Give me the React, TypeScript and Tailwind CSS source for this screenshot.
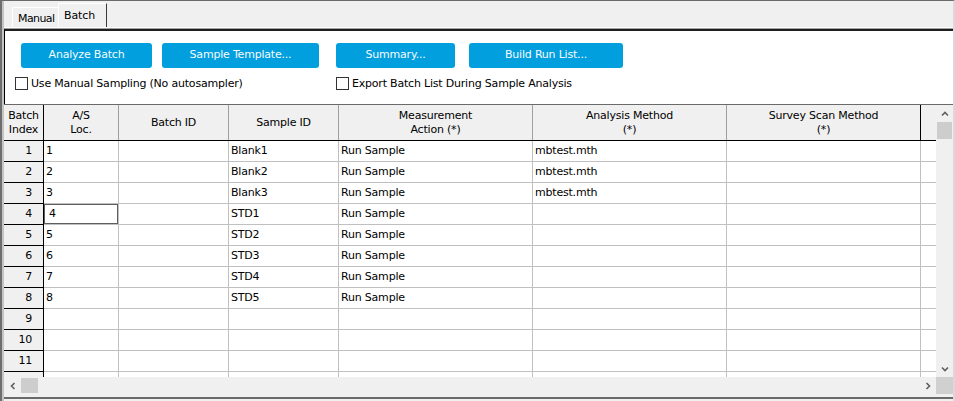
import React from "react";

type Row = { loc: string; sample: string; action: string; method: string; idx: string };

const base: Omit<Row, "idx">[] = [
  { loc: "1", sample: "Blank1", action: "Run Sample", method: "mbtest.mth" },
  { loc: "2", sample: "Blank2", action: "Run Sample", method: "mbtest.mth" },
  { loc: "3", sample: "Blank3", action: "Run Sample", method: "mbtest.mth" },
  { loc: "4", sample: "STD1", action: "Run Sample", method: "" },
  { loc: "5", sample: "STD2", action: "Run Sample", method: "" },
  { loc: "6", sample: "STD3", action: "Run Sample", method: "" },
  { loc: "7", sample: "STD4", action: "Run Sample", method: "" },
  { loc: "8", sample: "STD5", action: "Run Sample", method: "" },
  { loc: "", sample: "", action: "", method: "" },
  { loc: "", sample: "", action: "", method: "" },
  { loc: "", sample: "", action: "", method: "" },
  { loc: "", sample: "", action: "", method: "" },
];

const data: Row[] = base.map((r, i) => ({ ...r, idx: i < 11 ? String(i + 1) : "" }));

const PTS: Record<string, string> = {
  up: "1,5.5 4,2.5 7,5.5",
  down: "1,2.5 4,5.5 7,2.5",
  left: "5.5,1 2.5,4 5.5,7",
  right: "2.5,1 5.5,4 2.5,7",
};

function Chev({ dir }: { dir: "up" | "down" | "left" | "right" }) {
  return (
    <svg width="8" height="8" viewBox="0 0 8 8">
      <polyline points={PTS[dir]} fill="none" stroke="#5f5f5f" strokeWidth="1.6" />
    </svg>
  );
}

function Button({ w, label, cls }: { w: string; label: string; cls: string }) {
  return (
    <div
      className={`${w} ${cls} h-[25px] rounded-[3px] bg-[#029fde] text-[#f6fbff] flex items-center justify-center`}
    >
      {label}
    </div>
  );
}

function CheckBox() {
  return <div className="w-[13px] h-[13px] border border-[#333333] bg-white shrink-0" />;
}

export default function App() {
  return (
    <div className="w-[955px] h-[401px] overflow-hidden bg-[#f0f0f0] text-black text-[11px] tracking-[-0.2px] font-['DejaVu_Sans',sans-serif] flex flex-col border-t border-t-[#6a6a6a] border-l-2 border-l-[#6e6e6e] border-r-2 border-r-[#d9d9d9]">
      <div className="flex-1 flex flex-col border-l-2 border-l-[#c4c4c4]">
        {/* Tab strip */}
        <div className="h-[27px] flex items-end pl-[8px] border-b border-b-white">
          <div className="h-[20px] w-[46px] border-l border-t border-white pl-[5px] pt-[4px] leading-[13px] tracking-[-0.6px] whitespace-nowrap">
            Manual
          </div>
          <div className="h-[24px] w-[49px] border-l border-t border-white border-r border-r-[#3a3a3a] pl-[5px] pt-[5px] leading-[13px] tracking-[-0.1px]">
            Batch
          </div>
        </div>
        <div className="h-px bg-[#a0a0a0]" />

        {/* Top panel */}
        <div className="h-[75px] bg-white border-t-2 border-t-[#1e1e1e] border-l border-l-black pt-[12px]">
          <div className="flex">
            <Button w="w-[131px]" cls="ml-[16px]" label="Analyze Batch" />
            <Button w="w-[157px]" cls="ml-[10px]" label="Sample Template..." />
            <Button w="w-[119px]" cls="ml-[17px]" label="Summary..." />
            <Button w="w-[154px]" cls="ml-[14px]" label="Build Run List..." />
          </div>
          <div className="flex mt-[9px] h-[13px] items-center">
            <div className="ml-[10px] w-[321px] flex items-center">
              <CheckBox />
              <span className="ml-[3px] leading-[13px]">Use Manual Sampling (No autosampler)</span>
            </div>
            <div className="flex items-center">
              <CheckBox />
              <span className="ml-[3px] leading-[13px]">Export Batch List During Sample Analysis</span>
            </div>
          </div>
        </div>

        {/* Grid */}
        <div className="h-[290px] flex border-t border-t-[#6a6a6a]">
          <div className="w-[932px] flex flex-col">
            {/* Header */}
            <div className="h-[36px] flex border-b border-b-black bg-[#f0f0f0] leading-[14px] text-center">
              <div className="w-[40px] border-r border-r-black flex items-center justify-center">
                Batch<br />Index
              </div>
              <div className="w-[75px] border-r border-r-[#a0a0a0] flex items-center justify-center">
                A/S<br />Loc.
              </div>
              <div className="w-[110px] border-r border-r-[#a0a0a0] flex items-center justify-center">
                Batch ID
              </div>
              <div className="w-[110px] border-r border-r-[#a0a0a0] flex items-center justify-center">
                Sample ID
              </div>
              <div className="w-[194px] border-r border-r-[#a0a0a0] flex items-center justify-center">
                Measurement<br />Action (*)
              </div>
              <div className="w-[194px] border-r border-r-[#a0a0a0] flex items-center justify-center">
                Analysis Method<br />(*)
              </div>
              <div className="w-[194px] border-r border-r-black flex items-center justify-center">
                Survey Scan Method<br />(*)
              </div>
              <div className="w-[15px]" />
            </div>

            {/* Body */}
            <div className="h-[236px] overflow-hidden bg-white">
              {data.map((r, i) => (
                <div key={i} className="h-[21px] flex">
                  <div className="w-[40px] bg-[#f0f0f0] border-r border-b border-black pr-[11px] flex items-center justify-end">
                    {r.idx}
                  </div>
                  <div className="w-[75px] border-r border-b border-[#c0c0c0] relative flex items-center">
                    {i === 3 ? (
                      <>
                        <div className="absolute left-0 top-0 w-[74px] h-[20px] border border-[#5e5e5e]" />
                        <span className="pl-[5px]">{r.loc}</span>
                      </>
                    ) : (
                      <span className="pl-[2px]">{r.loc}</span>
                    )}
                  </div>
                  <div className="w-[110px] border-r border-b border-[#c0c0c0]" />
                  <div className="w-[110px] border-r border-b border-[#c0c0c0] flex items-center pl-[2px]">
                    {r.sample}
                  </div>
                  <div className="w-[194px] border-r border-b border-[#c0c0c0] flex items-center pl-[2px]">
                    {r.action}
                  </div>
                  <div className="w-[194px] border-r border-b border-[#c0c0c0] flex items-center pl-[2px]">
                    {r.method}
                  </div>
                  <div className="w-[194px] border-r border-b border-[#c0c0c0]" />
                  <div className="w-[15px] border-b border-[#c0c0c0]" />
                </div>
              ))}
            </div>

            {/* Horizontal scrollbar */}
            <div className="h-[17px] flex items-center bg-[#f0f0f0]">
              <div className="w-[17px] h-[17px] flex items-center justify-center">
                <Chev dir="left" />
              </div>
              <div className="w-[17px] h-[15px] bg-[#cdcdcd]" />
              <div className="flex-1" />
              <div className="w-[17px] h-[17px] flex items-center justify-center">
                <Chev dir="right" />
              </div>
            </div>
          </div>

          {/* Vertical scrollbar */}
          <div className="w-[17px] flex flex-col">
            <div className="h-[272px] flex flex-col bg-[#f0f0f0]">
              <div className="h-[17px] flex items-center justify-center">
                <Chev dir="up" />
              </div>
              <div className="h-[17px] w-[15px] mx-auto bg-[#cdcdcd]" />
              <div className="flex-1" />
              <div className="h-[17px] flex items-center justify-center">
                <Chev dir="down" />
              </div>
            </div>
            <div className="h-[17px] bg-[#d0d0d0]" />
          </div>
        </div>

        {/* Bottom edge */}
        <div className="h-[3px] bg-[#f0f0f0]" />
        <div className="h-[2px] bg-[#6a6a6a]" />
        <div className="flex-1 bg-[#f0f0f0]" />
      </div>
    </div>
  );
}
